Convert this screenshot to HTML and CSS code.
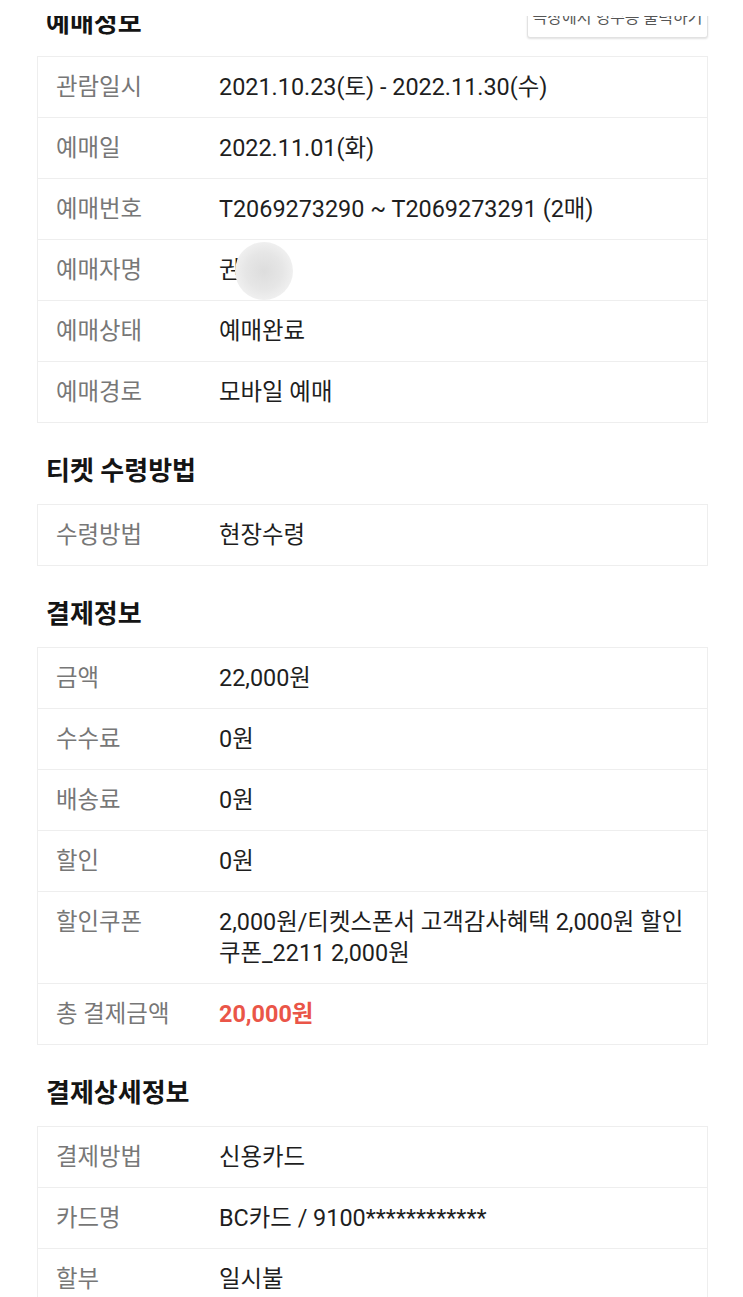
FILE: index.html
```html
<!DOCTYPE html>
<html lang="ko">
<head>
<meta charset="utf-8">
<title>예매정보</title>
<link rel="stylesheet" href="styles.css">
</head>
<body>
<div class="top-mask"></div>
<div class="page">
  <div class="section-head first">
    <h2 class="title">예매정보</h2>
    <button class="head-btn">극장에서 영수증 출력하기</button>
  </div>
  <div class="table">
    <div class="row"><div class="label">관람일시</div><div class="value">2021.10.23(토) - 2022.11.30(수)</div></div>
    <div class="row"><div class="label">예매일</div><div class="value">2022.11.01(화)</div></div>
    <div class="row"><div class="label">예매번호</div><div class="value">T2069273290 ~ T2069273291 (2매)</div></div>
    <div class="row"><div class="label">예매자명</div><div class="value"><span class="masked">권<span class="blur"></span></span></div></div>
    <div class="row"><div class="label">예매상태</div><div class="value">예매완료</div></div>
    <div class="row"><div class="label">예매경로</div><div class="value">모바일 예매</div></div>
  </div>

  <div class="section-head">
    <h2 class="title">티켓 수령방법</h2>
  </div>
  <div class="table">
    <div class="row"><div class="label">수령방법</div><div class="value">현장수령</div></div>
  </div>

  <div class="section-head">
    <h2 class="title">결제정보</h2>
  </div>
  <div class="table">
    <div class="row"><div class="label">금액</div><div class="value">22,000원</div></div>
    <div class="row"><div class="label">수수료</div><div class="value">0원</div></div>
    <div class="row"><div class="label">배송료</div><div class="value">0원</div></div>
    <div class="row"><div class="label">할인</div><div class="value">0원</div></div>
    <div class="row"><div class="label">할인쿠폰</div><div class="value">2,000원/티켓스폰서 고객감사혜택 2,000원 할인쿠폰_2211 2,000원</div></div>
    <div class="row"><div class="label">총 결제금액</div><div class="value total">20,000원</div></div>
  </div>

  <div class="section-head">
    <h2 class="title">결제상세정보</h2>
  </div>
  <div class="table">
    <div class="row"><div class="label">결제방법</div><div class="value">신용카드</div></div>
    <div class="row"><div class="label">카드명</div><div class="value">BC카드 / 9100************</div></div>
    <div class="row"><div class="label">할부</div><div class="value">일시불</div></div>
  </div>
</div>
</body>
</html>
```

FILE: styles.css
```css
html, body {
  margin: 0;
  padding: 0;
  background: #ffffff;
}

body {
  font-family: "Roboto", "Noto Sans CJK KR", sans-serif;
  color: #222222;
}

.top-mask {
  position: fixed;
  left: 0;
  top: 0;
  right: 0;
  height: 16px;
  background: #ffffff;
  z-index: 5;
}

.page {
  padding: 0 35px 0 37px;
}

.section-head {
  display: flex;
  justify-content: space-between;
  align-items: flex-end;
  margin: 31px 0 16px;
  padding-left: 9px;
}

.section-head.first {
  margin-top: -6px;
}

.title {
  margin: 0;
  font-size: 26px;
  line-height: 34px;
  font-weight: 700;
  color: #141414;
}

.head-btn {
  font-family: "Roboto", "Noto Sans CJK KR", sans-serif;
  width: 181px;
  height: 44px;
  margin-bottom: 2px;
  background: #ffffff;
  border: 1px solid #e2e2e2;
  border-radius: 3px;
  box-shadow: 0 1px 2px rgba(0, 0, 0, 0.12);
  font-size: 16px;
  color: #555555;
  padding: 0;
}

.table {
  border: 1px solid #eeeeee;
}

.row {
  display: grid;
  grid-template-columns: 181px 1fr;
  border-top: 1px solid #eeeeee;
  padding: 15px 20px 14px 0;
  font-size: 23.4px;
  line-height: 31px;
}

.row:first-child {
  border-top: none;
}

.label {
  padding-left: 18px;
  color: #777777;
}

.value {
  color: #1e1e1e;
}

.value.total {
  color: #ea5548;
  font-weight: 700;
}

.masked {
  position: relative;
  display: inline-block;
}

.blur {
  position: absolute;
  left: 16px;
  top: -13px;
  width: 58px;
  height: 58px;
  border-radius: 50%;
  background: radial-gradient(circle at 50% 50%, #dddddd 0%, #e6e6e6 45%, #f3f3f3 80%, rgba(255,255,255,0) 100%);
}
```
